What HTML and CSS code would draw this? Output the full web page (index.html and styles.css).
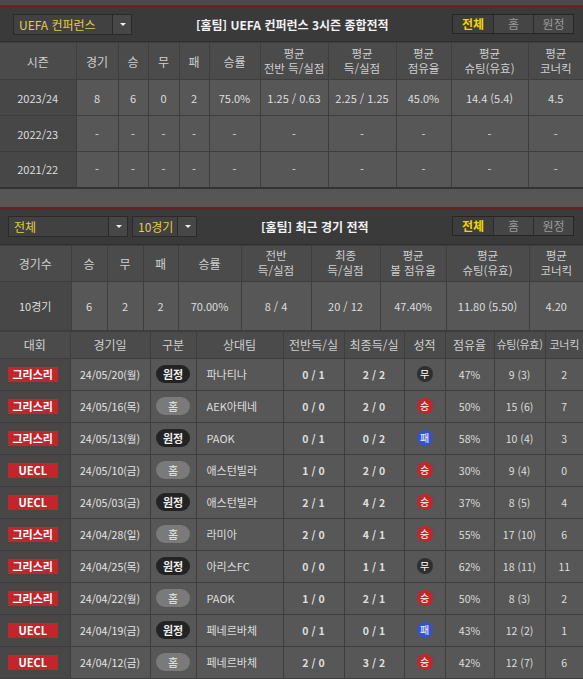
FILE: index.html
```
<!DOCTYPE html>
<html lang="ko">
<head>
<meta charset="utf-8">
<link rel="stylesheet" href="styles.css">
</head>
<body>
<div class="topstrip"></div>
<section class="panel">
  <div class="bar">
    <div class="select sel-league"><span class="sel-text">UEFA 컨퍼런스</span><span class="sel-arrow"></span></div>
    <div class="title">[홈팀] UEFA 컨퍼런스 3시즌 종합전적</div>
    <div class="toggle"><span class="seg active">전체</span><span class="seg">홈</span><span class="seg">원정</span></div>
  </div>
  <table class="season">
    <colgroup>
      <col style="width:76px"><col style="width:42px"><col style="width:30px"><col style="width:31px"><col style="width:30px"><col style="width:51px"><col style="width:68px"><col style="width:68px"><col style="width:55px"><col style="width:77px"><col style="width:55px">
    </colgroup>
    <thead>
      <tr><th>시즌</th><th>경기</th><th>승</th><th>무</th><th>패</th><th>승률</th><th><span class="ln">평균</span><span class="ln">전반 득/실점</span></th><th><span class="ln">평균</span><span class="ln">득/실점</span></th><th><span class="ln">평균</span><span class="ln">점유율</span></th><th><span class="ln">평균</span><span class="ln">슈팅(유효)</span></th><th><span class="ln">평균</span><span class="ln">코너킥</span></th></tr>
    </thead>
    <tbody>
      <tr><td class="key">2023/24</td><td>8</td><td>6</td><td>0</td><td>2</td><td>75.0%</td><td>1.25 / 0.63</td><td>2.25 / 1.25</td><td>45.0%</td><td>14.4 (5.4)</td><td>4.5</td></tr>
      <tr><td class="key">2022/23</td><td>-</td><td>-</td><td>-</td><td>-</td><td>-</td><td>-</td><td>-</td><td>-</td><td>-</td><td>-</td></tr>
      <tr><td class="key">2021/22</td><td>-</td><td>-</td><td>-</td><td>-</td><td>-</td><td>-</td><td>-</td><td>-</td><td>-</td><td>-</td></tr>
    </tbody>
  </table>
</section>
<div class="gap"></div>
<section class="panel">
  <div class="bar bar2">
    <div class="select sel-all"><span class="sel-text">전체</span><span class="sel-arrow"></span></div>
    <div class="select sel-count"><span class="sel-text">10경기</span><span class="sel-arrow"></span></div>
    <div class="title">[홈팀] 최근 경기 전적</div>
    <div class="toggle"><span class="seg active">전체</span><span class="seg">홈</span><span class="seg">원정</span></div>
  </div>
  <table class="summary">
    <colgroup>
      <col style="width:71px"><col style="width:36px"><col style="width:36px"><col style="width:35px"><col style="width:63px"><col style="width:70px"><col style="width:69px"><col style="width:66px"><col style="width:83px"><col style="width:54px">
    </colgroup>
    <thead>
      <tr><th>경기수</th><th>승</th><th>무</th><th>패</th><th>승률</th><th><span class="ln">전반</span><span class="ln">득/실점</span></th><th><span class="ln">최종</span><span class="ln">득/실점</span></th><th><span class="ln">평균</span><span class="ln">볼 점유율</span></th><th><span class="ln">평균</span><span class="ln">슈팅(유효)</span></th><th><span class="ln">평균</span><span class="ln">코너킥</span></th></tr>
    </thead>
    <tbody>
      <tr><td class="key">10경기</td><td>6</td><td>2</td><td>2</td><td>70.00%</td><td>8 / 4</td><td>20 / 12</td><td>47.40%</td><td>11.80 (5.50)</td><td>4.20</td></tr>
    </tbody>
  </table>
  <table class="matches">
    <colgroup>
      <col style="width:70px"><col style="width:80px"><col style="width:46px"><col style="width:87px"><col style="width:61px"><col style="width:60px"><col style="width:41px"><col style="width:49px"><col style="width:51px"><col style="width:38px">
    </colgroup>
    <thead>
      <tr><th>대회</th><th>경기일</th><th>구분</th><th>상대팀</th><th>전반득/실</th><th>최종득/실</th><th>성적</th><th>점유율</th><th class="tight">슈팅(유효)</th><th class="tight">코너킥</th></tr>
    </thead>
    <tbody>
      <tr><td class="key"><span class="lg">그리스리</span></td><td class="date">24/05/20(월)</td><td><span class="ha away">원정</span></td><td class="team">파나티나</td><td class="sc">0 / 1</td><td class="sc">2 / 2</td><td><span class="res draw">무</span></td><td>47%</td><td>9 (3)</td><td>2</td></tr>
      <tr><td class="key"><span class="lg">그리스리</span></td><td class="date">24/05/16(목)</td><td><span class="ha home">홈</span></td><td class="team">AEK아테네</td><td class="sc">0 / 0</td><td class="sc">2 / 0</td><td><span class="res win">승</span></td><td>50%</td><td>15 (6)</td><td>7</td></tr>
      <tr><td class="key"><span class="lg">그리스리</span></td><td class="date">24/05/13(월)</td><td><span class="ha away">원정</span></td><td class="team">PAOK</td><td class="sc">0 / 1</td><td class="sc">0 / 2</td><td><span class="res loss">패</span></td><td>58%</td><td>10 (4)</td><td>3</td></tr>
      <tr><td class="key"><span class="lg">UECL</span></td><td class="date">24/05/10(금)</td><td><span class="ha home">홈</span></td><td class="team">애스턴빌라</td><td class="sc">1 / 0</td><td class="sc">2 / 0</td><td><span class="res win">승</span></td><td>30%</td><td>9 (4)</td><td>0</td></tr>
      <tr><td class="key"><span class="lg">UECL</span></td><td class="date">24/05/03(금)</td><td><span class="ha away">원정</span></td><td class="team">애스턴빌라</td><td class="sc">2 / 1</td><td class="sc">4 / 2</td><td><span class="res win">승</span></td><td>37%</td><td>8 (5)</td><td>4</td></tr>
      <tr><td class="key"><span class="lg">그리스리</span></td><td class="date">24/04/28(일)</td><td><span class="ha home">홈</span></td><td class="team">라미아</td><td class="sc">2 / 0</td><td class="sc">4 / 1</td><td><span class="res win">승</span></td><td>55%</td><td>17 (10)</td><td>6</td></tr>
      <tr><td class="key"><span class="lg">그리스리</span></td><td class="date">24/04/25(목)</td><td><span class="ha away">원정</span></td><td class="team">아리스FC</td><td class="sc">0 / 0</td><td class="sc">1 / 1</td><td><span class="res draw">무</span></td><td>62%</td><td>18 (11)</td><td>11</td></tr>
      <tr><td class="key"><span class="lg">그리스리</span></td><td class="date">24/04/22(월)</td><td><span class="ha home">홈</span></td><td class="team">PAOK</td><td class="sc">1 / 0</td><td class="sc">2 / 1</td><td><span class="res win">승</span></td><td>50%</td><td>8 (3)</td><td>2</td></tr>
      <tr><td class="key"><span class="lg">UECL</span></td><td class="date">24/04/19(금)</td><td><span class="ha away">원정</span></td><td class="team">페네르바체</td><td class="sc">0 / 1</td><td class="sc">0 / 1</td><td><span class="res loss">패</span></td><td>43%</td><td>12 (2)</td><td>1</td></tr>
      <tr><td class="key"><span class="lg">UECL</span></td><td class="date">24/04/12(금)</td><td><span class="ha home">홈</span></td><td class="team">페네르바체</td><td class="sc">2 / 0</td><td class="sc">3 / 2</td><td><span class="res win">승</span></td><td>42%</td><td>12 (7)</td><td>6</td></tr>
    </tbody>
  </table>
</section>
</body>
</html>
```
FILE: styles.css
```
* { box-sizing: border-box; }
html, body { margin: 0; padding: 0; }
body {
  width: 583px;
  background: #565656;
  font-family: "Noto Sans CJK KR", "Noto Sans", sans-serif;
  font-size: 11px;
  color: #dcdcdc;
  overflow: hidden;
}
.topstrip { height: 5px; background: #4b4b4b; }
.panel { border-top: 2px solid #6e1f1f; }
.bar {
  height: 35px;
  background: #3a3a3a;
  display: flex;
  align-items: center;
  padding: 0 9px 0 13px;
  border-bottom: 1px solid #2e2e2e;
}
.bar2 { height: 36px; padding-left: 8px; }
.select {
  display: flex;
  height: 21px;
  border: 1px solid #2a2a2a;
  background: #414141;
}
.sel-text {
  flex: 1;
  color: #e5cd3e;
  font-size: 12px;
  line-height: 19px;
  padding-left: 5px;
}
.sel-arrow {
  width: 19px;
  border-left: 1px solid #2a2a2a;
  background: #474747;
  position: relative;
}
.sel-arrow::after {
  content: "";
  position: absolute;
  left: 7px;
  top: 8px;
  border-left: 3px solid transparent;
  border-right: 3px solid transparent;
  border-top: 3px solid #f0f0f0;
}
.sel-league { width: 119px; }
.sel-all { width: 120px; }
.sel-count { width: 65px; margin-left: 4px; }
.title {
  margin-left: 64px;
  color: #f2f2f2;
  font-weight: bold;
  font-size: 12px;
  white-space: nowrap;
}
.toggle {
  margin-left: auto;
  display: flex;
  height: 20px;
  border: 1px solid #252525;
  background: #454545;
}
.seg {
  width: 40px;
  text-align: center;
  font-size: 12px;
  line-height: 18px;
  color: #9a9a9a;
  border-left: 1px solid #2c2c2c;
}
.seg:first-child { border-left: 0; }
.seg.active { color: #f3d500; font-weight: bold; background: #3d3d3d; }

table {
  width: 583px;
  table-layout: fixed;
  border-collapse: collapse;
}
th, td {
  padding: 0;
  text-align: center;
  vertical-align: middle;
  border: 1px solid #3e3e3e;
  overflow: hidden;
  white-space: nowrap;
}
th:first-child, td:first-child { border-left: 0; }
th:last-child, td:last-child { border-right: 0; }
th {
  background: #4b4b4b;
  color: #cfcfcf;
  font-weight: normal;
  font-size: 12px;
  line-height: 15px;
}
th .ln { display: block; height: 15px; line-height: 15px; font-size: 11.5px; }
td { background: #575757; color: #dedede; }
td.key { background: #474747; }

.season th { height: 37px; }
.season td { height: 36px; font-size: 11px; }
.season tbody tr:last-child td { border-bottom: 2px solid #333; }

.gap { height: 18px; background: #565656; }

.summary th { height: 36px; }
.summary td { height: 49px; }

.matches th { height: 27px; font-size: 12px; }
.matches th.tight { font-size: 11px; letter-spacing: -0.3px; }
.matches td { height: 32px; font-size: 10.5px; }
.matches td.date { color: #e6e6e6; }
.matches td.sc { font-weight: bold; }
.matches td.team { text-align: left; padding-left: 10px; font-size: 11px; }

.lg {
  display: inline-block;
  width: 50px;
  height: 15px;
  line-height: 15px;
  background: #c0262b;
  color: #fff;
  font-weight: bold;
  font-size: 11px;
  margin-left: -4px;
}
.ha {
  display: inline-block;
  width: 34px;
  height: 18px;
  line-height: 18px;
  border-radius: 9px;
  font-size: 11px;
  font-weight: bold;
}
.ha.away { background: #232323; color: #f0f0f0; }
.ha.home { background: #7a7a7a; color: #ececec; font-weight: normal; }
.res {
  display: inline-block;
  width: 16px;
  height: 16px;
  line-height: 16px;
  border-radius: 50%;
  font-size: 10px;
  color: #fff;
}
.res.draw { background: #2f2f2f; }
.res.win { background: #c4242a; }
.res.loss { background: #3552c8; }
```
